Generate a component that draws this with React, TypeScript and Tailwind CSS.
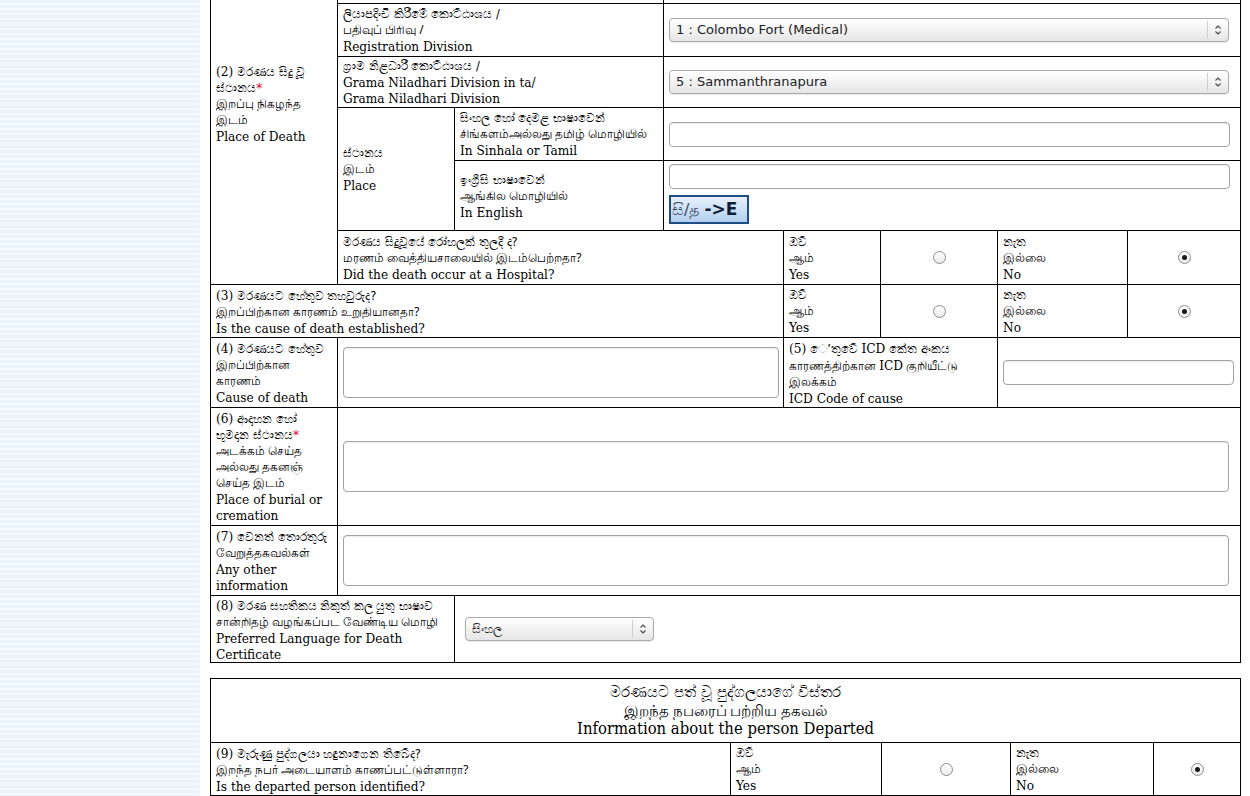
import React from "react";

const SI = "block text-[11.5px] leading-[16px] font-['DejaVu_Sans',sans-serif]";
const TA = "block text-[12px] leading-[16px] font-['Noto_Sans',sans-serif]";
const EN = "block text-[13.5px] leading-[16px] font-['DejaVu_Serif_Condensed','DejaVu_Serif',serif]";
const ENI = "text-[13.5px] font-['DejaVu_Serif_Condensed','DejaVu_Serif',serif]";
const TD = "border border-black px-[5px] py-0 align-middle";

function Lines({
  si = [],
  ta = [],
  en = [],
}: {
  si?: React.ReactNode[];
  ta?: React.ReactNode[];
  en?: React.ReactNode[];
}) {
  return (
    <div className="text-left">
      {si.map((s, i) => (
        <span key={"s" + i} className={SI}>{s}</span>
      ))}
      {ta.map((s, i) => (
        <span key={"t" + i} className={TA}>{s}</span>
      ))}
      {en.map((s, i) => (
        <span key={"e" + i} className={EN}>{s}</span>
      ))}
    </div>
  );
}

function N({ n }: { n: string }) {
  return <span className={ENI}>{n}</span>;
}

function Star() {
  return <span className="text-[#e8003a] text-[13px]">*</span>;
}

function Arrows() {
  return (
    <svg width="8" height="12" viewBox="0 0 8 12" fill="none">
      <path d="M1.5 4.5 L4 2 L6.5 4.5" stroke="#4a4a4a" strokeWidth="1.1" />
      <path d="M1.5 7.5 L4 10 L6.5 7.5" stroke="#4a4a4a" strokeWidth="1.1" />
    </svg>
  );
}

function Select({ text, w, sinhala }: { text: string; w: string; sinhala?: boolean }) {
  return (
    <div
      className={`${w} flex h-[24px] items-center rounded-[4px] border border-[#a9a9a9] bg-linear-to-b from-white to-[#e6e6e6] shadow-[0_1px_1px_rgba(0,0,0,0.08)]`}
    >
      <span
        className={`flex-1 truncate pl-[6px] text-left text-[#222] ${sinhala ? "text-[12px]" : "text-[13px]"} font-['DejaVu_Sans',sans-serif]`}
      >
        {text}
      </span>
      <span className="flex h-[18px] w-[21px] items-center justify-center border-l border-[#cfcfcf]">
        <Arrows />
      </span>
    </div>
  );
}

function Input({ cls }: { cls: string }) {
  return (
    <div
      className={`${cls} h-[25px] rounded-[4px] border border-[#a3a3a3] bg-white shadow-[inset_0_1px_1px_rgba(0,0,0,0.08)]`}
    />
  );
}

function Area({ cls }: { cls: string }) {
  return (
    <div
      className={`${cls} h-[51px] rounded-[4px] border border-[#a3a3a3] bg-white shadow-[inset_0_1px_1px_rgba(0,0,0,0.08)]`}
    />
  );
}

function Radio({ checked }: { checked?: boolean }) {
  return (
    <div className="flex justify-center">
      <span className="flex h-[13px] w-[13px] items-center justify-center rounded-full border border-[#8c8c8c] bg-linear-to-b from-white to-[#eaeaea]">
        {checked && <span className="h-[5px] w-[5px] rounded-full bg-[#1a1a1a]" />}
      </span>
    </div>
  );
}

function Yes() {
  return <Lines si={["ඔව්"]} ta={["ஆம்"]} en={["Yes"]} />;
}
function No() {
  return <Lines si={["නැත"]} ta={["இல்லை"]} en={["No"]} />;
}

export default function App() {
  return (
    <div className="flex h-[796px] w-[1250px] overflow-hidden bg-white text-black">
      <div className="h-[796px] w-[200px] shrink-0 bg-[repeating-linear-gradient(180deg,#ebf3fa_0px,#ebf3fa_3px,#f5f9fc_3px,#f5f9fc_5px)]" />
      <div className="w-[1040px] shrink-0 pl-[10px]">
        <table className="-mt-[79px] w-[1030px] table-fixed border-collapse">
          <colgroup>
            <col className="w-[127px]" />
            <col className="w-[117px]" />
            <col className="w-[209px]" />
            <col className="w-[120px]" />
            <col className="w-[97px]" />
            <col className="w-[117px]" />
            <col className="w-[130px]" />
            <col className="w-[113px]" />
          </colgroup>
          <tbody>
            <tr className="h-[82px]">
              <td rowSpan={6} className={TD}>
                <Lines
                  si={[
                    <span><N n="(2)" /> මරණය සිදු වූ</span>,
                    <span>ස්ථානය<Star /></span>,
                  ]}
                  ta={["இறப்பு நிகழந்த", "இடம்"]}
                  en={["Place of Death"]}
                />
              </td>
              <td colSpan={2} className={TD} />
              <td colSpan={5} className={TD} />
            </tr>
            <tr className="h-[53px]">
              <td colSpan={2} className={TD}>
                <Lines si={["ලියාපදිංචි කිරීමේ කොට්ඨාශය /"]} ta={["பதிவுப் பிரிவு /"]} en={["Registration Division"]} />
              </td>
              <td colSpan={5} className={TD}>
                <Select text="1 : Colombo Fort (Medical)" w="w-[560px]" />
              </td>
            </tr>
            <tr className="h-[51px]">
              <td colSpan={2} className={TD}>
                <Lines si={["ග්‍රාම නිළධාරී කොට්ඨාශය /"]} en={["Grama Niladhari Division in ta/", "Grama Niladhari Division"]} />
              </td>
              <td colSpan={5} className={TD}>
                <Select text="5 : Sammanthranapura" w="w-[560px]" />
              </td>
            </tr>
            <tr className="h-[53px]">
              <td rowSpan={2} className={TD}>
                <Lines si={["ස්ථානය"]} ta={["இடம்"]} en={["Place"]} />
              </td>
              <td className={TD}>
                <Lines si={["සිංහල හෝ දෙමළ භාෂාවෙන්"]} ta={["சிங்களம்அல்லது தமிழ் மொழியில்"]} en={["In Sinhala or Tamil"]} />
              </td>
              <td colSpan={5} className={TD}>
                <Input cls="w-[561px]" />
              </td>
            </tr>
            <tr className="h-[70px]">
              <td className={TD}>
                <Lines si={["ඉංග්‍රීසි භාෂාවෙන්"]} ta={["ஆங்கில மொழியில்"]} en={["In English"]} />
              </td>
              <td colSpan={5} className={`${TD} align-top pt-[3px]`}>
                <Input cls="w-[561px]" />
                <div className="mt-[6px] flex h-[29px] w-[80px] items-center border-2 border-[#1f4e85] bg-linear-to-b from-[#e8f1fb] to-[#b3cfee] pl-[1px]">
                  <span className="text-[16px] leading-none text-[#3c4a60] font-['DejaVu_Sans',sans-serif]">සි/த</span>
                  <span className="ml-[5px] text-[17px] leading-none font-semibold text-[#0d1f38] font-['DejaVu_Sans',sans-serif]">-&gt;E</span>
                </div>
              </td>
            </tr>
            <tr className="h-[54px]">
              <td colSpan={3} className={TD}>
                <Lines si={["මරණය සිදුවූයේ රෝහලක් තුලදී ද?"]} ta={["மரணம் வைத்தியசாலையில் இடம்பெற்றதா?"]} en={["Did the death occur at a Hospital?"]} />
              </td>
              <td className={TD}><Yes /></td>
              <td className={TD}><Radio /></td>
              <td className={TD}><No /></td>
              <td className={TD}><Radio checked /></td>
            </tr>
            <tr className="h-[53px]">
              <td colSpan={4} className={TD}>
                <Lines si={[<span><N n="(3)" /> මරණයට හේතුව තහවුරුද?</span>]} ta={["இறப்பிற்கான காரணம் உறுதியானதா?"]} en={["Is the cause of death established?"]} />
              </td>
              <td className={TD}><Yes /></td>
              <td className={TD}><Radio /></td>
              <td className={TD}><No /></td>
              <td className={TD}><Radio checked /></td>
            </tr>
            <tr className="h-[70px]">
              <td className={TD}>
                <Lines si={[<span><N n="(4)" /> මරණයට හේතුව</span>]} ta={["இறப்பிற்கான", "காரணம்"]} en={["Cause of death"]} />
              </td>
              <td colSpan={3} className={TD}>
                <Area cls="w-[436px]" />
              </td>
              <td colSpan={2} className={TD}>
                <Lines
                  si={[<span><N n="(5)" /><span className="ml-[4px]">ෙ’තුවේ</span> <N n="ICD" /> කේත අංකය</span>]}
                  ta={[<span>காரணத்திற்கான <N n="ICD" /> குறியீட்டு</span>, "இலக்கம்"]}
                  en={["ICD Code of cause"]}
                />
              </td>
              <td colSpan={2} className={TD}>
                <Input cls="w-[231px]" />
              </td>
            </tr>
            <tr className="h-[118px]">
              <td className={TD}>
                <Lines
                  si={[<span><N n="(6)" /> ආදාහන හෝ</span>, <span>භූමදාන ස්ථානය<Star /></span>]}
                  ta={["அடக்கம் செய்த", "அல்லது தகனஞ்", "செய்த இடம்"]}
                  en={["Place of burial or", "cremation"]}
                />
              </td>
              <td colSpan={7} className={TD}>
                <Area cls="w-[886px]" />
              </td>
            </tr>
            <tr className="h-[70px]">
              <td className={TD}>
                <Lines si={[<span><N n="(7)" /> වෙනත් තොරතුරු</span>]} ta={["வேறுத்தகவல்கள்"]} en={["Any other", "information"]} />
              </td>
              <td colSpan={7} className={TD}>
                <Area cls="w-[886px]" />
              </td>
            </tr>
            <tr className="h-[67px]">
              <td colSpan={2} className={TD}>
                <Lines
                  si={[<span><N n="(8)" /> මරණ සහතිකය නිකුත් කල යුතු භාෂාව</span>]}
                  ta={["சான்றிதழ் வழங்கப்பட வேண்டிய மொழி"]}
                  en={["Preferred Language for Death", "Certificate"]}
                />
              </td>
              <td colSpan={6} className={`${TD} pl-[10px]`}>
                <Select text="සිංහල" w="w-[189px]" sinhala />
              </td>
            </tr>
          </tbody>
        </table>

        <table className="mt-[15px] w-[1030px] table-fixed border-collapse">
          <colgroup>
            <col className="w-[320px]" />
            <col className="w-[200px]" />
            <col className="w-[151px]" />
            <col className="w-[129px]" />
            <col className="w-[143px]" />
            <col className="w-[87px]" />
          </colgroup>
          <tbody>
            <tr className="h-[64px]">
              <td colSpan={6} className={TD}>
                <div className="text-center">
                  <span className="block text-[15px] leading-[18px] font-['DejaVu_Sans',sans-serif]">මරණයට පත් වූ පුද්ගලයාගේ විස්තර</span>
                  <span className="block text-[14.5px] leading-[18px] font-['Noto_Sans',sans-serif]">இறந்த நபரைப் பற்றிய தகவல்</span>
                  <span className="block text-[16.5px] leading-[20px] font-['DejaVu_Serif_Condensed','DejaVu_Serif',serif]">Information about the person Departed</span>
                </div>
              </td>
            </tr>
            <tr className="h-[53px]">
              <td colSpan={2} className={TD}>
                <Lines
                  si={[<span><N n="(9)" /> මැරුණු පුද්ගලයා හඳුනාගෙන තිබේද?</span>]}
                  ta={["இறந்த நபர் அடையாளம் காணப்பட்டுள்ளாரா?"]}
                  en={["Is the departed person identified?"]}
                />
              </td>
              <td className={TD}><Yes /></td>
              <td className={TD}><Radio /></td>
              <td className={TD}><No /></td>
              <td className={TD}><Radio checked /></td>
            </tr>
            <tr className="h-[53px]">
              <td className={TD} />
              <td colSpan={2} className={TD} />
              <td colSpan={3} className={TD} />
            </tr>
          </tbody>
        </table>
      </div>
    </div>
  );
}
